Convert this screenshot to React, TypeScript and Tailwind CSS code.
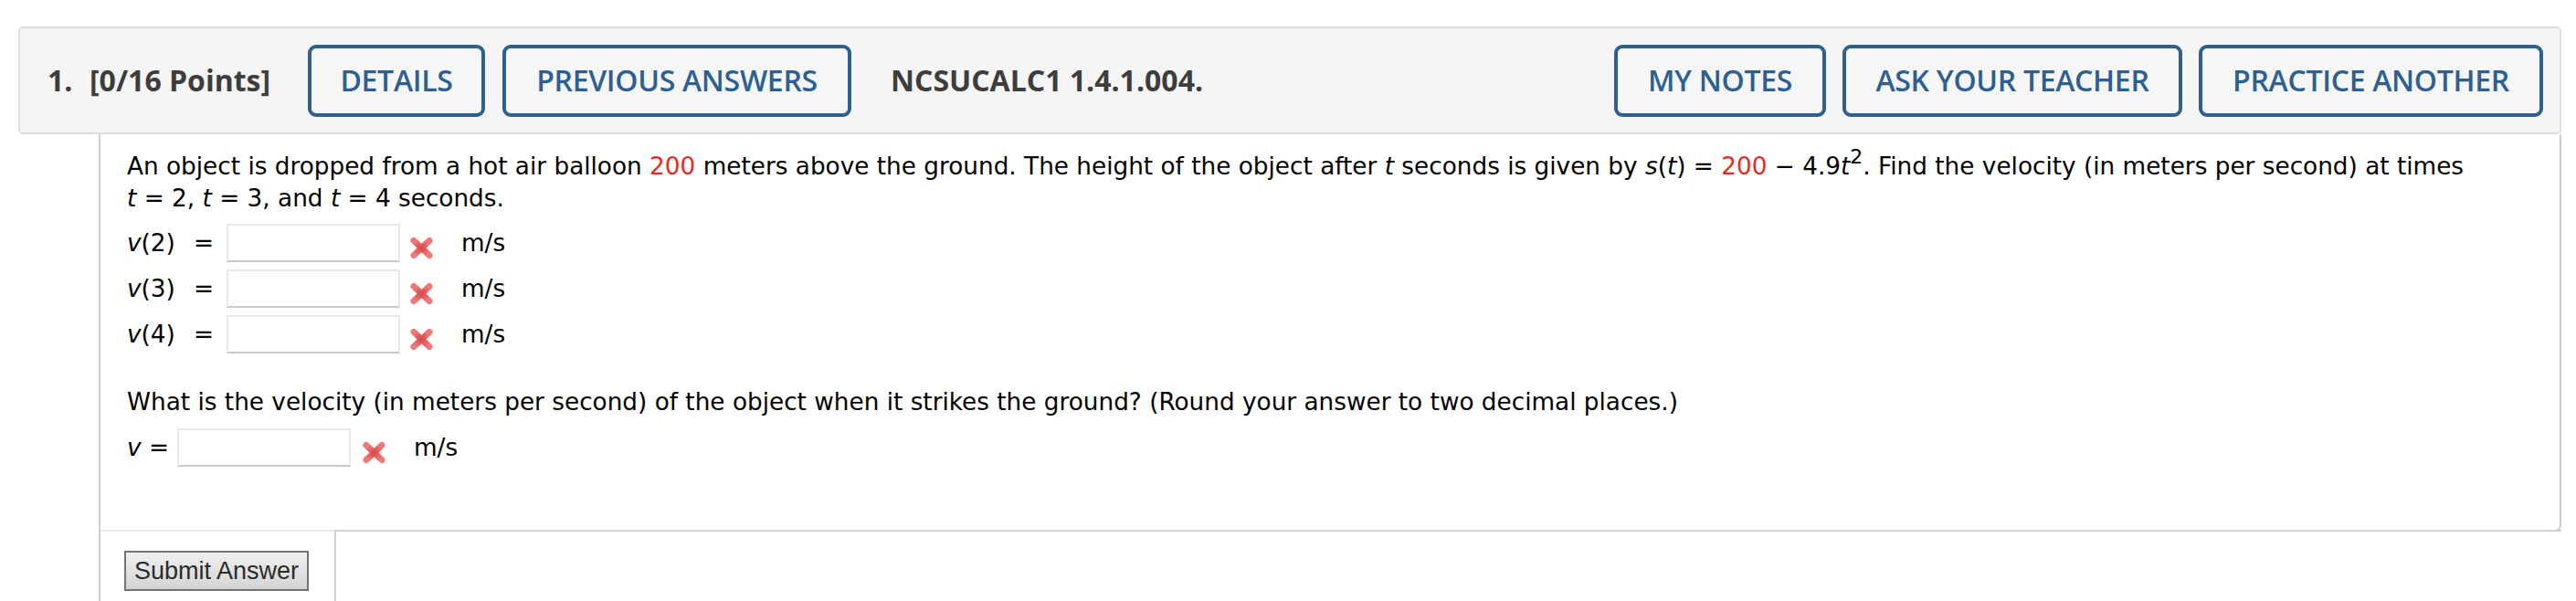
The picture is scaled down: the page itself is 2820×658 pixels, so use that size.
import React from 'react';

const headFont = { fontFamily: '"Open Sans", "Liberation Sans", sans-serif' };

interface HeadButtonProps {
  label: string;
  width: string;
}

function HeadButton({ label, width }: HeadButtonProps) {
  return (
    <button
      className={`${width} h-[79px] shrink-0 rounded-[9px] border-4 border-[#2d5f91] bg-[#f6f6f6] text-[32px] font-semibold tracking-[-0.3px] text-[#2d5f91]`}
      style={headFont}
    >
      {label}
    </button>
  );
}

// red "wrong answer" cross
function WrongMark() {
  return (
    <svg width="27" height="25" viewBox="0 0 27 25" className="mt-[10px] shrink-0">
      <defs>
        <radialGradient id="xg" cx="50%" cy="50%" r="60%">
          <stop offset="0%" stopColor="#d84646" />
          <stop offset="100%" stopColor="#ef7878" />
        </radialGradient>
      </defs>
      <path d="M5 4.5 L22 20.5 M22 4.5 L5 20.5" stroke="url(#xg)" strokeWidth="7" strokeLinecap="round" />
    </svg>
  );
}

function AnswerBox() {
  return (
    <div className="h-[42px] w-[190px] shrink-0 border-2 border-[#e9e9e9] border-b-[#c9c9c9] bg-white" />
  );
}

function VelocityRow({ t }: { t: string }) {
  return (
    <div className="flex h-[42px] items-center">
      <span className="w-[73px] shrink-0">
        <i>v</i>({t})
      </span>
      <span className="w-[36px] shrink-0">=</span>
      <AnswerBox />
      <span className="ml-[10px]">
        <WrongMark />
      </span>
      <span className="ml-[30px]">m/s</span>
    </div>
  );
}

export default function App() {
  return (
    <div className="h-[658px] w-[2820px] overflow-hidden bg-white">
      {/* question header */}
      <div className="ml-[20px] mt-[29px] flex h-[118px] w-[2784px] items-center rounded-[5px] border-2 border-[#dedede] bg-[#f5f5f5] pl-[30px] pr-[18px]">
        <span className="w-[46px] shrink-0 text-[32px] font-bold text-[#3d3d3d]" style={headFont}>
          1.
        </span>
        <span className="w-[239px] shrink-0 text-[32px] font-bold text-[#3d3d3d]" style={headFont}>
          [0/16 Points]
        </span>
        <div className="flex gap-[19px]">
          <HeadButton label="DETAILS" width="w-[194px]" />
          <HeadButton label="PREVIOUS ANSWERS" width="w-[382px]" />
        </div>
        <span className="ml-[43px] text-[32px] font-bold text-[#3d3d3d]" style={headFont}>
          NCSUCALC1 1.4.1.004.
        </span>
        <div className="ml-auto flex gap-[18px]">
          <HeadButton label="MY NOTES" width="w-[232px]" />
          <HeadButton label="ASK YOUR TEACHER" width="w-[372px]" />
          <HeadButton label="PRACTICE ANOTHER" width="w-[377px]" />
        </div>
      </div>

      {/* question body */}
      <div
        className="ml-[108px] w-[2696px] border-l-2 border-[#cfcfcf] text-[26.3px] leading-[35px] text-black"
        style={{ fontFamily: '"DejaVu Sans", Verdana, sans-serif' }}
      >
        <div className="rounded-br-[7px] border-r-2 border-b-2 border-[#cfcfcf] pb-[69px] pl-[29px] pt-[18px]">
          <p className="whitespace-nowrap">
            An object is dropped from a hot air balloon <span className="text-[#e8291f]">200</span> meters above the
            ground. The height of the object after <i>t</i> seconds is given by <i>s</i>(<i>t</i>) ={' '}
            <span className="text-[#e8291f]">200</span> &minus; 4.9<i>t</i>
            <span className="relative -top-[12px] text-[22px] leading-none">2</span>. Find the velocity (in meters
            per second) at times
            <br />
            <i>t</i> = 2, <i>t</i> = 3, and <i>t</i> = 4 seconds.
          </p>
          <div className="mt-[10px] flex flex-col gap-[8px]">
            <VelocityRow t="2" />
            <VelocityRow t="3" />
            <VelocityRow t="4" />
          </div>
          <p className="mt-[36px] whitespace-nowrap">
            What is the velocity (in meters per second) of the object when it strikes the ground? (Round your answer
            to two decimal places.)
          </p>
          <div className="mt-[11px] flex h-[42px] items-center">
            <span className="w-[55px] shrink-0">
              <i>v</i> =
            </span>
            <AnswerBox />
            <span className="ml-[12px]">
              <WrongMark />
            </span>
            <span className="ml-[30px]">m/s</span>
          </div>
        </div>

        {/* submit row */}
        <div className="flex h-[76px]">
          <div className="-mt-[2px] w-[256px] shrink-0 border-t-2 border-[#ececec] bg-white pl-[26px] pt-[21px]">
            <button
              className="h-[44px] w-[202px] border-2 border-[#737373] bg-gradient-to-b from-[#f0f0f0] to-[#d4d4d4] text-[27px] leading-none text-[#2b2b2b]"
              style={{ fontFamily: '"Liberation Sans", Arial, sans-serif' }}
            >
              Submit Answer
            </button>
          </div>
          <div className="-mt-[2px] flex-1 border-l-2 border-t-2 border-[#d2d2d2]" />
        </div>
      </div>
    </div>
  );
}
